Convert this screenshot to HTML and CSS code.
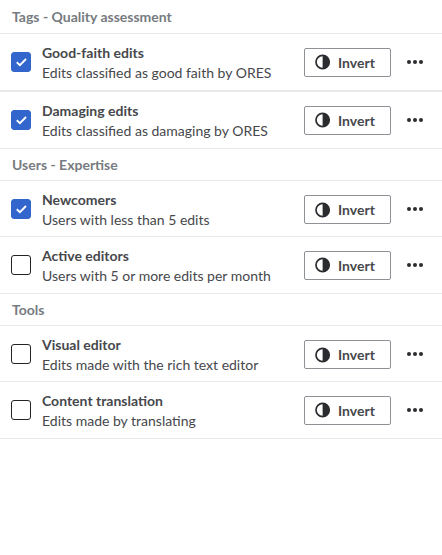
FILE: index.html
```html
<!DOCTYPE html>
<html lang="en"><head><meta charset="utf-8"><title>Filters</title><link rel="stylesheet" href="styles.css"></head>
<body>
<main id="filters"></main>
<script src="app.js"></script>
</body></html>
```
FILE: styles.css
```css
* { box-sizing: border-box; }
body { margin: 0; background: #fff; font-family: Lato, "Liberation Sans", sans-serif; font-size: 14px; line-height: 20px; color: #46484c; }
.heading { margin: 0; height: 32px; padding: 6px 12px; font-size: 14px; line-height: 20px; font-weight: 700; color: #777b80; border-bottom: 1px solid #e8e9eb; }
.heading--first { height: 34px; padding-top: 7px; }
.row { display: flex; align-items: center; height: 56px; padding: 0 18px 0 11px; border-bottom: 1px solid #e8e9eb; }
.row--tall { height: 58px; border-bottom-width: 2px; }
.row--end { height: 57px; }
.box { width: 20px; height: 20px; flex: none; border: 1px solid #222; border-radius: 3px; background: #fff; }
.box--on { background: #36c; border-color: #36c; }
.box svg { display: block; width: 18px; height: 18px; }
.text { flex: 1; margin-left: 11px; padding-top: 2px; white-space: nowrap; }
.name { font-weight: 700; }
.invert { display: flex; align-items: center; width: 87px; height: 29px; padding: 1px 10px 0; border: 1px solid #8e9196; border-radius: 2px; background: #fff; color: #46484c; font: 700 14px/20px Lato, sans-serif; }
.row--short .invert { margin-top: 2px; }
.invert svg { width: 16px; height: 16px; margin: -1px 7px 0 0; }
.more { width: 18px; height: 6px; margin-left: 15px; }
```
FILE: app.js
```js
const groups = [
  ["Tags - Quality assessment", [["Good-faith edits", "Edits classified as good faith by ORES", 1], ["Damaging edits", "Edits classified as damaging by ORES", 1]]],
  ["Users - Expertise", [["Newcomers", "Users with less than 5 edits", 1], ["Active editors", "Users with 5 or more edits per month", 0]]],
  ["Tools", [["Visual editor", "Edits made with the rich text editor", 0], ["Content translation", "Edits made by translating", 0]]]
];
const check = '<svg viewBox="0 0 18 18"><path d="M4.8 9.2 7.9 12.1 14 6" fill="none" stroke="#fff" stroke-width="1.9"/></svg>';
document.getElementById("filters").innerHTML = groups.map(([title, rows], g) =>
  `<h2 class="heading ${g ? "" : "heading--first"}">${title}</h2>` + rows.map(([name, desc, on], i) =>
  `<div class="row ${i ? "row--end" : g ? "row--short" : "row--tall"}"><span class="box ${on ? "box--on" : ""}">${on ? check : ""}</span><div class="text"><div class="name">${name}</div><div>${desc}</div></div><button class="invert"><svg viewBox="0 0 16 16"><circle cx="7.6" cy="8" r="6.6" fill="none" stroke="#2b2c2f" stroke-width="1.7"/><path d="M7.6 1a7 7 0 0 1 0 14z" fill="#2b2c2f"/></svg>Invert</button><svg class="more" viewBox="0 0 18 6"><g fill="#2b2c2f"><circle cx="3" cy="3" r="2"/><circle cx="9" cy="3" r="2"/><circle cx="15" cy="3" r="2"/></g></svg></div>`).join("")).join("");
```
